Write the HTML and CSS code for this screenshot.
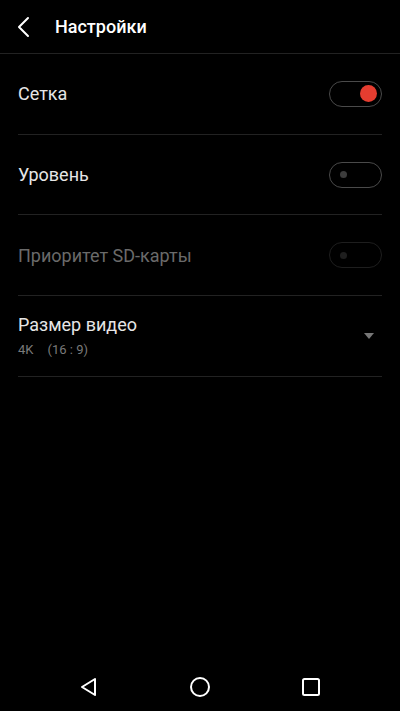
FILE: index.html
```html
<!doctype html>
<html lang="ru">
  <head>
    <meta charset="utf-8" />
    <title>Настройки</title>
    <link rel="stylesheet" href="styles.css">
  </head>
  <body>
    <div class="screen">
        <header class="topbar">
            <svg class="back" width="14" height="22" viewBox="0 0 14 22">
                <path d="M11 2 L2 11 L11 20" fill="none" stroke="#fff" stroke-width="2" stroke-linecap="round" stroke-linejoin="round"/>
            </svg>
            <h1>Настройки</h1>
        </header>
        <main class="list">
            <div class="row">
                <span class="label">Сетка</span>
                <span class="switch on"><span class="knob"></span></span>
            </div>
            <div class="row">
                <span class="label">Уровень</span>
                <span class="switch"><span class="knob"></span></span>
            </div>
            <div class="row disabled">
                <span class="label">Приоритет SD-карты</span>
                <span class="switch"><span class="knob"></span></span>
            </div>
            <div class="row">
                <div class="twoline">
                    <span class="label">Размер видео</span>
                    <span class="sub"><span class="res">4K</span>(16 : 9)</span>
                </div>
                <span class="caret"></span>
            </div>
        </main>
        <nav class="navbar">
            <svg width="22" height="22" viewBox="0 0 22 22">
                <path d="M17 3 L4 11 L17 19 Z" fill="none" stroke="#fff" stroke-width="2" stroke-linejoin="round"/>
            </svg>
            <svg width="22" height="22" viewBox="0 0 22 22">
                <circle cx="11" cy="11" r="9" fill="none" stroke="#fff" stroke-width="2"/>
            </svg>
            <svg width="22" height="22" viewBox="0 0 22 22">
                <rect x="3" y="3" width="16" height="16" rx="1.5" fill="none" stroke="#fff" stroke-width="2"/>
            </svg>
        </nav>
    </div>
  </body>
</html>
```

FILE: styles.css
```css
html,
body
{
    margin: 0;
    background: #000;
    font-family: Roboto, "Noto Sans", sans-serif;
    color: #e6e6e6;
}

.screen
{
    height: 711px;
    display: flex;
    flex-direction: column;
}

.topbar
{
    height: 53px;
    display: flex;
    align-items: center;
    padding-left: 17px;
    border-bottom: 1px solid #222;
}

.back
{
    margin-right: 24px;
    margin-top: 1px;
}

.topbar h1
{
    margin: 0;
    font-size: 18px;
    font-weight: 500;
    color: #fff;
}

.list
{
    flex: 1;
    padding: 0 18px;
}

.row
{
    height: 79.7px;
    display: flex;
    align-items: center;
    justify-content: space-between;
    border-bottom: 1px solid #222;
}

.label
{
    font-size: 18px;
    color: #e6e6e6;
}

.disabled .label
{
    color: #6a6a6a;
}

.twoline
{
    display: flex;
    flex-direction: column;
    gap: 7px;
    margin-top: 0;
}

.sub
{
    font-size: 13px;
    color: #7a7a7a;
}

.res
{
    margin-right: 14px;
}

.switch
{
    box-sizing: border-box;
    width: 53px;
    height: 26px;
    border: 1.5px solid #4a4a4a;
    border-radius: 13px;
    display: flex;
    align-items: center;
    padding: 0 10px;
}

.switch .knob
{
    width: 7px;
    height: 7px;
    border-radius: 50%;
    background: #3c3c3c;
}

.switch.on
{
    justify-content: flex-end;
    padding: 0 4px;
}

.switch.on .knob
{
    width: 17px;
    height: 17px;
    background: #e53d30;
}

.disabled .switch
{
    border-color: #1e1e1e;
}

.disabled .switch .knob
{
    background: #1e1e1e;
}

.caret
{
    width: 0;
    height: 0;
    border-left: 5px solid transparent;
    border-right: 5px solid transparent;
    border-top: 6px solid #777;
    margin-right: 8px;
}

.navbar
{
    height: 48px;
    display: flex;
    align-items: center;
    justify-content: center;
    gap: 89px;
}
```
